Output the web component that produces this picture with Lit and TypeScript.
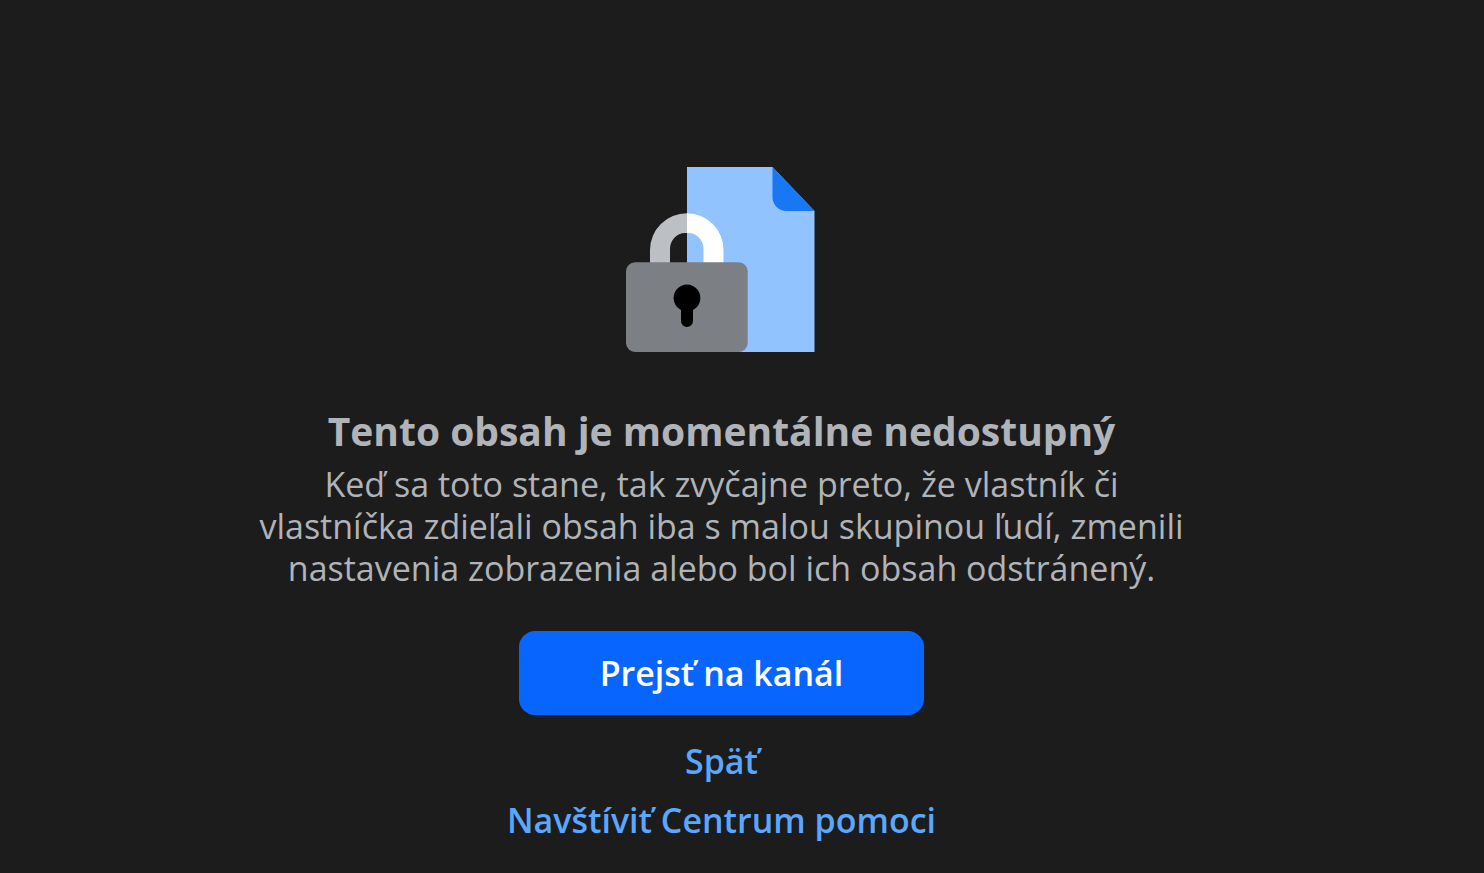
import { LitElement, html, css } from "lit";
import { customElement } from "lit/decorators.js";

@customElement("app-root")
export class AppRoot extends LitElement {
  static styles = css`
    :host {
      display: block;
      min-height: 100vh;
      box-sizing: border-box;
      padding: 167px 41px 27px 0;
      background: #1c1c1c;
      color: #b0b3b8;
      font-family: "Segoe UI", "Open Sans", "Noto Sans", sans-serif;
      font-size: 34px;
      line-height: 42px;
    }
    .notice {
      display: flex;
      flex-direction: column;
      align-items: center;
      text-align: center;
    }
    .art {
      display: block;
      width: 191px;
      height: 185px;
      margin-bottom: 55px;
    }
    .title {
      margin: 0 0 8px;
      font-size: 39px;
      line-height: 48px;
      font-weight: 700;
    }
    .text {
      margin: 0 0 42px;
      max-width: 940px;
    }
    .primary {
      border: 0;
      border-radius: 16px;
      min-width: 405px;
      padding: 21px 48px;
      margin-bottom: 25px;
      background: #0866ff;
      color: #fff;
      font: inherit;
      font-weight: 600;
      cursor: pointer;
    }
    .link {
      color: #5aa7ff;
      font-weight: 600;
      text-decoration: none;
    }
    .link + .link {
      margin-top: 17px;
    }
    .link:hover {
      text-decoration: underline;
    }
  `;

  render() {
    return html`
      <main class="notice">
        <svg class="art" viewBox="0 0 191 185" aria-hidden="true">
          <path fill="#90c3ff" d="M61 0H146.5L188.5 44V185H61Z" />
          <path fill="#1877f2" d="M146.5 0V30a14 14 0 0 0 14 14H188.5Z" />
          <path fill="#1c1c1c" d="M61 66h-2a15 16 0 0 0-15 16V96H61Z" />
          <path fill="#bcc0c4" d="M61 46.3a37 36.7 0 0 0-37 36.7V96H44V82a15 16 0 0 1 15-16h2Z" />
          <path fill="#fff" d="M61 46.3a36.5 36.7 0 0 1 36.5 36.7V96H77.5V82A15 16 0 0 0 62.5 66H61Z" />
          <rect x="0" y="95.3" width="121.7" height="89.7" rx="9" fill="#7c7f83" />
          <path d="M55 143a13.4 13.4 0 1 1 12 0V154a6 6 0 0 1-12 0Z" />
        </svg>
        <h1 class="title">Tento obsah je momentálne nedostupný</h1>
        <p class="text">
          Keď sa toto stane, tak zvyčajne preto, že vlastník či vlastníčka zdieľali obsah iba s malou skupinou ľudí,
          zmenili nastavenia zobrazenia alebo bol ich obsah odstránený.
        </p>
        <button class="primary" type="button">Prejsť na kanál</button>
        <a class="link" href="#back">Späť</a>
        <a class="link" href="#help">Navštíviť Centrum pomoci</a>
      </main>
    `;
  }
}
